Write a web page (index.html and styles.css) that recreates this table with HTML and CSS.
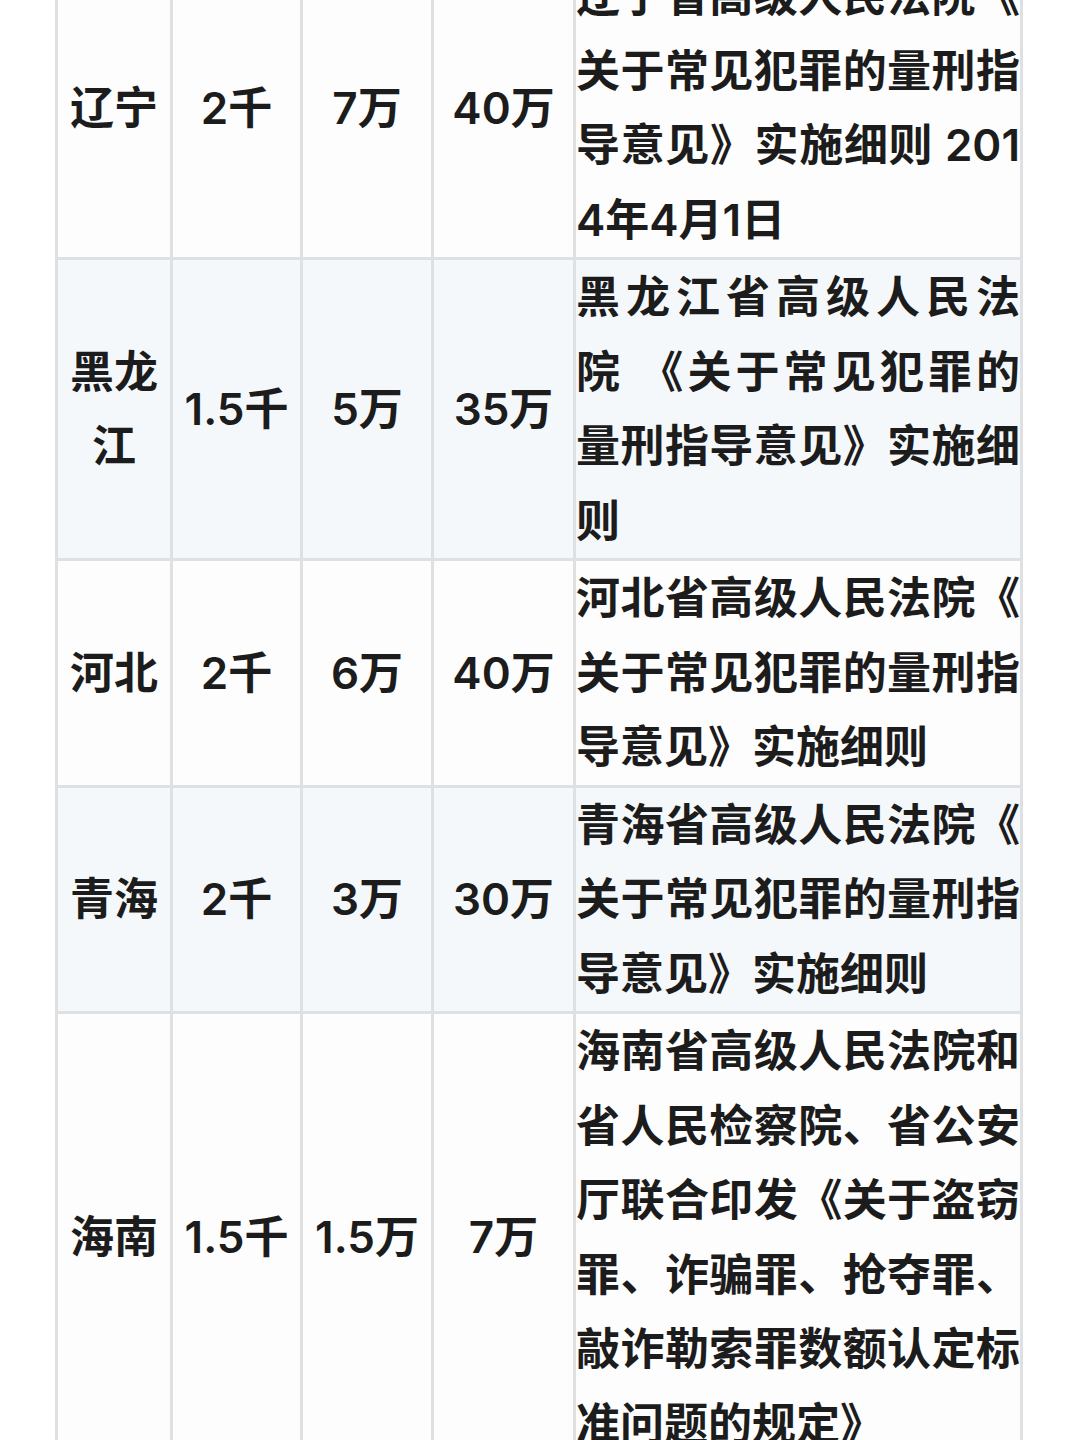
FILE: index.html
```html
<!DOCTYPE html>
<html lang="zh-CN">
<head>
<meta charset="utf-8">
<title>各省盗窃罪数额认定标准</title>
<link rel="stylesheet" href="styles.css">
</head>
<body>
<div class="page">
  <div class="grid">
    <div class="cell name">辽宁</div>
    <div class="cell num">2千</div>
    <div class="cell num">7万</div>
    <div class="cell num">40万</div>
    <div class="cell doc">辽宁省高级人民法院《关于常见犯罪的量刑指导意见》实施细则 2014年4月1日</div>

    <div class="cell name alt">黑龙江</div>
    <div class="cell num alt">1.5千</div>
    <div class="cell num alt">5万</div>
    <div class="cell num alt">35万</div>
    <div class="cell doc alt">黑龙江省高级人民法<span class="nb">院 《关</span>于常见犯罪的量刑指导意见》实施细则</div>

    <div class="cell name">河北</div>
    <div class="cell num">2千</div>
    <div class="cell num">6万</div>
    <div class="cell num">40万</div>
    <div class="cell doc">河北省高级人民法院《关于常见犯罪的量刑指导意见》实施细则</div>

    <div class="cell name alt">青海</div>
    <div class="cell num alt">2千</div>
    <div class="cell num alt">3万</div>
    <div class="cell num alt">30万</div>
    <div class="cell doc alt">青海省高级人民法院《关于常见犯罪的量刑指导意见》实施细则</div>

    <div class="cell name">海南</div>
    <div class="cell num">1.5千</div>
    <div class="cell num">1.5万</div>
    <div class="cell num">7万</div>
    <div class="cell doc">海南省高级人民法院和省人民检察院、省公安厅联合印发《关于盗窃罪、诈骗罪、抢夺罪、敲诈勒索罪数额认定标准问题的规定》</div>
  </div>
</div>
</body>
</html>
```

FILE: styles.css
```css
html, body {
  margin: 0;
  padding: 0;
  background: #ffffff;
}

.page {
  width: 1080px;
  height: 1440px;
  overflow: hidden;
}

.grid {
  display: grid;
  grid-template-columns: 112px 127px 128px 139px 444px;
  gap: 3px;
  padding: 3px;
  width: 968px;
  box-sizing: border-box;
  margin: -44px 0 0 55px;
  background: #dfe0e2;
  font-family: "Inter", "Noto Sans CJK SC", "Noto Sans", sans-serif;
  font-weight: 600;
  font-size: 44px;
  line-height: 74.5px;
  color: #1c1c1c;
}

.cell {
  background: #fdfdfd;
  display: flex;
  align-items: center;
}

.cell.alt {
  background: #f5f8fb;
}

.name, .num {
  justify-content: center;
  text-align: center;
}

.name {
  padding: 0 6px;
}

.num {
  white-space: nowrap;
}

.doc {
  display: block;
  text-align: justify;
  word-break: break-all;
  line-break: anywhere;
}

.nb {
  white-space: nowrap;
}
```
